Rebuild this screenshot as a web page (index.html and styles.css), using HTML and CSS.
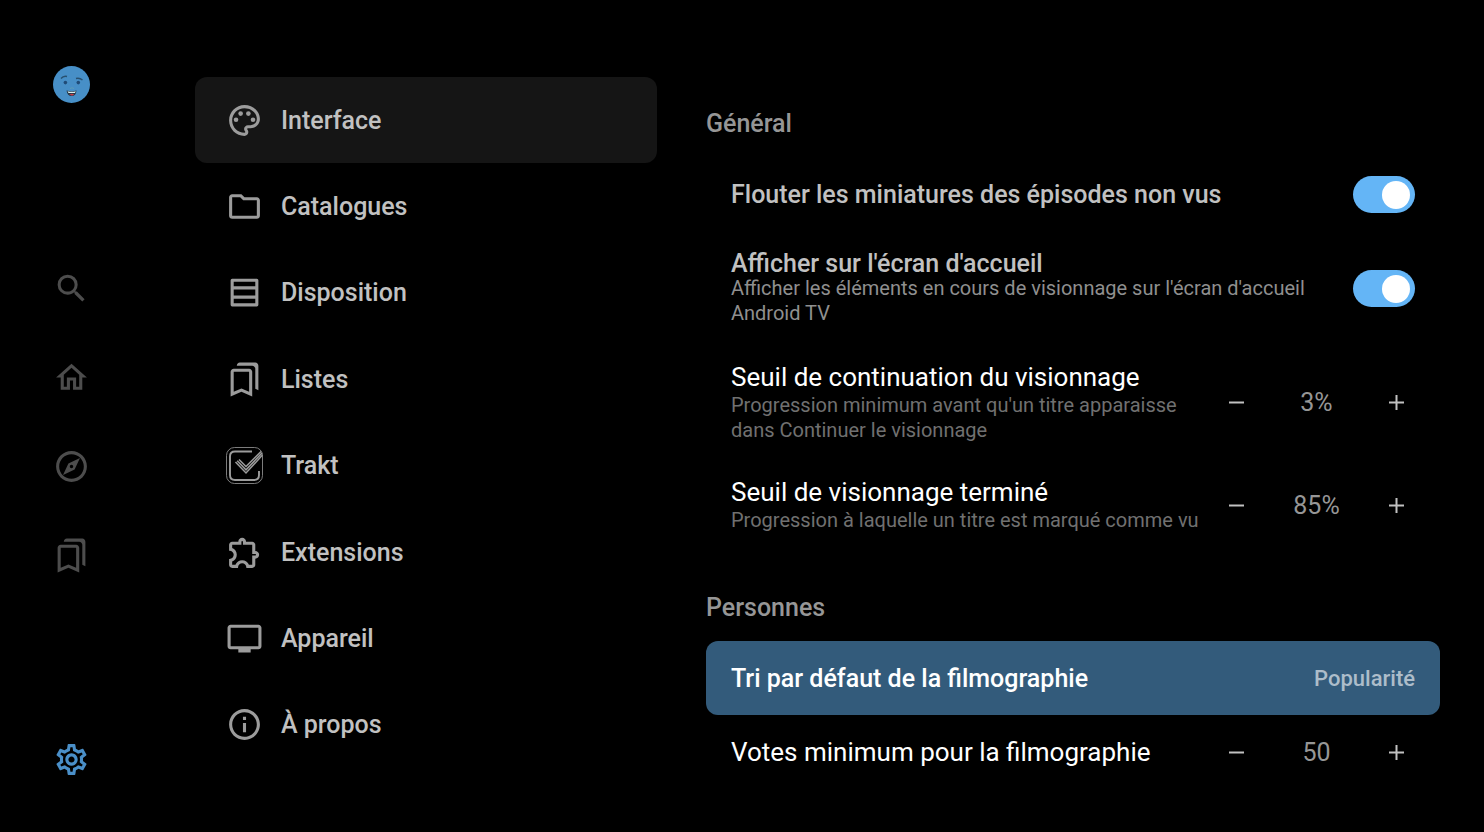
FILE: index.html
```html
<!DOCTYPE html>
<html lang="fr">
<head>
<meta charset="utf-8">
<meta name="viewport" content="width=device-width, initial-scale=1">
<title>Paramètres</title>
<link rel="stylesheet" href="styles.css">
</head>
<body>
<div class="app">
  <nav class="rail" aria-label="Navigation principale">
    <a class="rail-link" href="#profil" aria-label="Profil">
      <svg class="icon" viewBox="0 0 37 37">
        <circle cx="18.500" cy="18.500" r="18.500" fill="#478fc7"/>
        <path d="M8 12.500Q10.500 9.500 14 10.500M23 12.500Q26.500 11.500 29.500 14" fill="none" stroke="#28506f" stroke-width="1.400"/>
        <circle cx="12.400" cy="16.600" r="1.800" fill="#204b77"/><circle cx="25.300" cy="16.600" r="1.800" fill="#204b77"/>
        <path d="M17 22.500Q19 21 21 22.500" fill="none" stroke="#5f9db8"/>
        <path d="M13.500 24.500Q19 26 23.500 24.500Q23 30 18.500 30Q14.500 30 13.500 24.500Z" fill="#243747"/>
        <path d="M14.500 25.200Q19 26.200 22.800 25.200L22 27H15.500Z" fill="#d7eeee"/>
        <path d="M16 28.300Q19 27 21.500 28.300L19 29.700Z" fill="#c43f4b"/>
      </svg>
    </a>
    <div class="rail-group">
      <a class="rail-link" href="#recherche" aria-label="Recherche"><svg class="icon" viewBox="0 0 24 24"><path d="M15.500 14h-.79l-.28-.27A6.470 6.470 0 0 0 16 9.500 6.500 6.500 0 1 0 9.500 16c1.610 0 3.090-.59 4.230-1.570l.27.28v.79l5 4.990L20.490 19l-4.990-5zm-6 0C7.010 14 5 11.990 5 9.500S7.010 5 9.500 5 14 7.010 14 9.500 11.990 14 9.500 14z"/></svg></a>
      <a class="rail-link" href="#accueil" aria-label="Accueil"><svg class="icon" viewBox="0 0 24 24"><path d="M12 5.690l5 4.500V18h-2v-6H9v6H7v-7.810l5-4.500M12 3L2 12h3v8h6v-6h2v6h6v-8h3L12 3z"/></svg></a>
      <a class="rail-link" href="#explorer" aria-label="Explorer"><svg class="icon" viewBox="0 0 24 24"><path d="M12 2C6.480 2 2 6.480 2 12s4.480 10 10 10 10-4.480 10-10S17.520 2 12 2zm0 18c-4.410 0-8-3.590-8-8s3.590-8 8-8 8 3.590 8 8-3.590 8-8 8zm-5.500-2.500l7.510-3.490L17.500 6.500 9.990 9.990 6.500 17.500zm5.500-6.600c.61 0 1.100.49 1.100 1.100s-.49 1.100-1.100 1.100-1.100-.49-1.100-1.100.49-1.100 1.100-1.100z"/></svg></a>
      <a class="rail-link" href="#bibliotheque" aria-label="Bibliothèque"><svg class="icon" viewBox="0 0 24 24"><path d="M15 7v12.970l-4.210-1.810-.79-.34-.79.34L5 19.970V7h10m4-6H8.990C7.890 1 7 1.900 7 3h10c1.100 0 2 .9 2 2v13l2 1V3c0-1.100-.9-2-2-2zm-4 4H5c-1.100 0-2 .9-2 2v16l7-3 7 3V7c0-1.100-.9-2-2-2z"/></svg></a>
    </div>
    <a class="rail-link rail-current" href="#parametres" aria-label="Paramètres" aria-current="page"><svg class="icon" viewBox="0 0 24 24"><path d="M19.430 12.980c.04-.32.07-.64.07-.98 0-.34-.03-.66-.07-.98l2.110-1.650c.19-.15.24-.42.12-.64l-2-3.460c-.09-.16-.26-.25-.44-.25-.06 0-.12.01-.17.03l-2.490 1c-.52-.4-1.080-.73-1.690-.98l-.38-2.650C14.460 2.180 14.250 2 14 2h-4c-.25 0-.46.18-.49.42l-.38 2.650c-.61.25-1.170.59-1.690.98l-2.490-1c-.06-.02-.12-.03-.18-.03-.17 0-.34.09-.43.25l-2 3.460c-.13.22-.07.49.12.64l2.110 1.650c-.04.32-.07.65-.07.98 0 .33.03.66.07.98l-2.110 1.650c-.19.15-.24.42-.12.64l2 3.460c.09.16.26.25.44.25.06 0 .12-.01.17-.03l2.490-1c.52.4 1.080.73 1.690.98l.38 2.650c.03.24.24.42.49.42h4c.25 0 .46-.18.49-.42l.38-2.650c.61-.25 1.170-.59 1.690-.98l2.490 1c.06.02.12.03.18.03.17 0 .34-.09.43-.25l2-3.460c.12-.22.07-.49-.12-.64l-2.110-1.650zm-1.980-1.710c.04.31.05.52.05.73 0 .21-.02.43-.05.73l-.14 1.130.89.7 1.080.84-.7 1.210-1.270-.51-1.040-.42-.9.68c-.43.32-.84.56-1.250.73l-1.060.43-.16 1.130-.2 1.350h-1.400l-.19-1.350-.16-1.130-1.060-.43c-.43-.18-.83-.41-1.230-.71l-.91-.7-1.060.43-1.270.51-.7-1.210 1.080-.84.89-.7-.14-1.130c-.03-.31-.05-.54-.05-.74s.02-.43.05-.73l.14-1.130-.89-.7-1.080-.84.7-1.210 1.270.51 1.040.42.9-.68c.43-.32.84-.56 1.250-.73l1.060-.43.16-1.130.2-1.350h1.390l.19 1.350.16 1.130 1.060.43c.43.18.83.41 1.230.71l.91.7 1.060-.43 1.270-.51.7 1.210-1.070.85-.89.7.14 1.130zM12 8c-2.210 0-4 1.790-4 4s1.790 4 4 4 4-1.790 4-4-1.790-4-4-4zm0 6c-1.100 0-2-.9-2-2s.9-2 2-2 2 .9 2 2-.9 2-2 2z"/></svg></a>
  </nav>

  <nav class="menu" aria-label="Paramètres">
    <a class="menu-item menu-current" href="#interface" aria-current="page"><svg class="icon" viewBox="0 0 24 24"><path d="M12 22C6.490 22 2 17.510 2 12S6.490 2 12 2s10 4.040 10 9c0 3.310-2.690 6-6 6h-1.770c-.28 0-.5.22-.5.5 0 .12.05.23.13.33.41.47.64 1.060.64 1.670 0 1.380-1.120 2.500-2.500 2.500zm0-18c-4.410 0-8 3.590-8 8s3.590 8 8 8c.28 0 .5-.22.5-.5 0-.16-.08-.28-.14-.35-.41-.46-.63-1.050-.63-1.650 0-1.380 1.120-2.500 2.500-2.500H16c2.210 0 4-1.790 4-4 0-3.860-3.590-7-8-7z"/><circle cx="6.500" cy="11.500" r="1.500"/><circle cx="9.500" cy="7.500" r="1.500"/><circle cx="14.500" cy="7.500" r="1.500"/><circle cx="17.500" cy="11.500" r="1.500"/></svg>Interface</a>
    <a class="menu-item" href="#catalogues"><svg class="icon" viewBox="0 0 24 24"><path d="M20 6h-8l-2-2H4c-1.100 0-1.990.9-1.990 2L2 18c0 1.100.9 2 2 2h16c1.100 0 2-.9 2-2V8c0-1.100-.9-2-2-2zm0 12H4V6h5.170l2 2H20v10z"/></svg>Catalogues</a>
    <a class="menu-item" href="#disposition"><svg class="icon" viewBox="0 0 24 24"><path d="M4 4h16v16H4zM4 9h16M4 15h16" fill="none" stroke="currentColor" stroke-width="2" stroke-linejoin="round"/></svg>Disposition</a>
    <a class="menu-item" href="#listes"><svg class="icon" viewBox="0 0 24 24"><path d="M15 7v12.970l-4.210-1.810-.79-.34-.79.34L5 19.970V7h10m4-6H8.990C7.890 1 7 1.900 7 3h10c1.100 0 2 .9 2 2v13l2 1V3c0-1.100-.9-2-2-2zm-4 4H5c-1.100 0-2 .9-2 2v16l7-3 7 3V7c0-1.100-.9-2-2-2z"/></svg>Listes</a>
    <a class="menu-item" href="#trakt"><svg class="icon" viewBox="0 0 37 37" fill="none" stroke="currentColor"><rect x=".5" y=".5" width="36" height="36" rx="8" stroke-width=".8"/><path d="M26 4.500H9Q4 4.500 4 9.500V28Q4 33 9 33H28Q33 33 33 28V24" stroke-width="1.900"/><path d="M9.500 15L20 26L36.500 8M13 12.500L20 19.500L35 4.500M11.200 13.700L20 22.800L36 6" stroke-width="1.500"/></svg>Trakt</a>
    <a class="menu-item" href="#extensions"><svg class="icon" viewBox="0 0 24 24"><path d="M10.500 4.500c.28 0 .5.22.5.5v2h6v6h2c.28 0 .5.22.5.5s-.22.5-.5.5h-2v6h-2.120c-.68-1.750-2.390-3-4.380-3s-3.700 1.250-4.380 3H4v-2.120c1.750-.68 3-2.390 3-4.380 0-1.990-1.240-3.700-2.990-4.380L4 7h6V5c0-.28.22-.5.5-.5m0-2C9.120 2.500 8 3.620 8 5H4c-1.100 0-1.990.9-1.990 2v3.800h.29c1.490 0 2.700 1.210 2.700 2.700s-1.210 2.700-2.700 2.700H2V20c0 1.100.9 2 2 2h3.800v-.3c0-1.490 1.210-2.700 2.700-2.700s2.700 1.210 2.700 2.700v.3H17c1.100 0 2-.9 2-2v-4c1.380 0 2.500-1.120 2.500-2.500S20.380 11 19 11V7c0-1.100-.9-2-2-2h-4c0-1.380-1.120-2.500-2.500-2.500z"/></svg>Extensions</a>
    <a class="menu-item" href="#appareil"><svg class="icon" viewBox="0 0 24 24"><path d="M21 3H3c-1.100 0-2 .9-2 2v12c0 1.100.9 2 2 2h5v2h8v-2h5c1.100 0 2-.9 2-2V5c0-1.100-.9-2-2-2zm0 14H3V5h18v12z"/></svg>Appareil</a>
    <a class="menu-item" href="#a-propos"><svg class="icon" viewBox="0 0 24 24"><path d="M11 7h2v2h-2zm0 4h2v6h-2zm1-9C6.480 2 2 6.480 2 12s4.480 10 10 10 10-4.480 10-10S17.520 2 12 2zm0 18c-4.410 0-8-3.590-8-8s3.590-8 8-8 8 3.590 8 8-3.590 8-8 8z"/></svg>À propos</a>
  </nav>

  <main class="settings">
    <section>
      <h2 class="heading">Général</h2>
      <div class="row">
        <label class="title" for="blur">Flouter les miniatures des épisodes non vus</label>
        <input class="switch" id="blur" type="checkbox" role="switch" checked>
      </div>
      <div class="row">
        <div class="text">
          <label class="title" for="home">Afficher sur l'écran d'accueil</label>
          <p class="hint" id="home-hint">Afficher les éléments en cours de visionnage sur l'écran d'accueil Android TV</p>
        </div>
        <input class="switch" id="home" type="checkbox" role="switch" aria-describedby="home-hint" checked>
      </div>
      <div class="row row-step">
        <div class="text">
          <h3 class="title" id="continue">Seuil de continuation du visionnage</h3>
          <p class="hint">Progression minimum avant qu'un titre apparaisse dans Continuer le visionnage</p>
        </div>
        <div class="stepper" role="group" aria-labelledby="continue">
          <button class="step" type="button" aria-label="Diminuer"><svg viewBox="0 0 15 15"><path d="M0 7.500h15"/></svg></button>
          <output class="value">3%</output>
          <button class="step" type="button" aria-label="Augmenter"><svg viewBox="0 0 15 15"><path d="M0 7.500h15M7.500 0v15"/></svg></button>
        </div>
      </div>
      <div class="row row-step">
        <div class="text">
          <h3 class="title" id="done">Seuil de visionnage terminé</h3>
          <p class="hint">Progression à laquelle un titre est marqué comme vu</p>
        </div>
        <div class="stepper" role="group" aria-labelledby="done">
          <button class="step" type="button" aria-label="Diminuer"><svg viewBox="0 0 15 15"><path d="M0 7.500h15"/></svg></button>
          <output class="value">85%</output>
          <button class="step" type="button" aria-label="Augmenter"><svg viewBox="0 0 15 15"><path d="M0 7.500h15M7.500 0v15"/></svg></button>
        </div>
      </div>
    </section>
    <section>
      <h2 class="heading">Personnes</h2>
      <button class="row row-focus" type="button">
        <span class="title">Tri par défaut de la filmographie</span>
        <span class="choice">Popularité</span>
      </button>
      <div class="row row-step">
        <h3 class="title" id="votes">Votes minimum pour la filmographie</h3>
        <div class="stepper" role="group" aria-labelledby="votes">
          <button class="step" type="button" aria-label="Diminuer"><svg viewBox="0 0 15 15"><path d="M0 7.500h15"/></svg></button>
          <output class="value">50</output>
          <button class="step" type="button" aria-label="Augmenter"><svg viewBox="0 0 15 15"><path d="M0 7.500h15M7.500 0v15"/></svg></button>
        </div>
      </div>
    </section>
  </main>
</div>
</body>
</html>
```

FILE: styles.css
```css
* {
  box-sizing: border-box;
}

body {
  margin: 0;
  background: #000;
  color: #c1c1c1;
  font-family: Roboto, "Noto Sans", sans-serif;
  font-size: 25px;
}

h2,
h3,
p {
  margin: 0;
  font-weight: 400;
}

button {
  border: 0;
  background: none;
  color: inherit;
  font: inherit;
}

a {
  color: inherit;
  text-decoration: none;
}

.app {
  display: grid;
  grid-template-columns: 146px 462fr 734fr;
  column-gap: 49px;
  min-height: 100vh;
  padding-right: 44px;
}

.icon {
  display: block;
  flex: none;
  width: 37px;
  height: 37px;
  fill: currentColor;
}

.icon[fill="none"] {
  fill: none;
}

.rail {
  display: flex;
  flex-direction: column;
  justify-content: space-between;
  align-items: center;
  padding: 66px 3px 54px 0;
  color: #4d4d4d;
}

.rail-group {
  display: flex;
  flex-direction: column;
  gap: 52px;
}

.rail-current {
  color: #4a8fc8;
}

.menu {
  display: grid;
  grid-auto-rows: minmax(86px, 1fr);
  padding: 77px 0 64px;
}

.menu-item {
  display: flex;
  align-items: center;
  gap: 18px;
  padding: 0 31px;
  border-radius: 12px;
  font-weight: 500;
}

.menu-item .icon {
  color: #9c9c9c;
}

.menu-current {
  background: #151515;
}

.settings {
  padding-top: 109px;
}

.heading {
  margin-bottom: 18px;
  color: #969696;
  font-size: 25px;
  font-weight: 500;
  line-height: 30px;
}

section + section {
  margin-top: 43px;
}

.row {
  display: flex;
  align-items: center;
  justify-content: space-between;
  gap: 24px;
  width: 100%;
  min-height: 74px;
  padding: 19px 25px;
  text-align: left;
}

.text {
  flex: 1;
  min-width: 0;
}

.title {
  display: block;
  font-size: 25px;
  font-weight: 500;
  line-height: 25px;
}

.hint {
  color: #8f8f8f;
  font-size: 20px;
  line-height: 25px;
}

.row-step {
  gap: 12px;
  padding-top: 17px;
  padding-bottom: 17px;
}

.row-step .title {
  color: #fff;
  font-size: 26px;
  font-weight: 400;
  line-height: 31px;
}

.row-step .hint {
  color: #707070;
}

.row-focus {
  border-radius: 12px;
  background: #335b7b;
  color: #fff;
}

.choice {
  color: #adbdca;
  font-size: 22px;
  font-weight: 500;
}

.switch {
  display: flex;
  flex: none;
  align-items: center;
  appearance: none;
  width: 62px;
  height: 37px;
  margin: 0;
  padding: 0 5px;
  border-radius: 19px;
  background: #444;
}

.switch::before {
  content: "";
  width: 28px;
  height: 28px;
  border-radius: 50%;
  background: #fff;
}

.switch:checked {
  justify-content: flex-end;
  background: #64b5f6;
}

.stepper {
  display: grid;
  flex: none;
  grid-template-columns: 37px 1fr 37px;
  align-items: center;
  width: 197px;
  color: #969696;
}

.step {
  display: grid;
  place-items: center;
  height: 37px;
  padding: 0;
  color: #c1c1c1;
}

.step svg {
  width: 15px;
  height: 15px;
  stroke: currentColor;
  stroke-width: 2;
}

.value {
  text-align: center;
}
```
